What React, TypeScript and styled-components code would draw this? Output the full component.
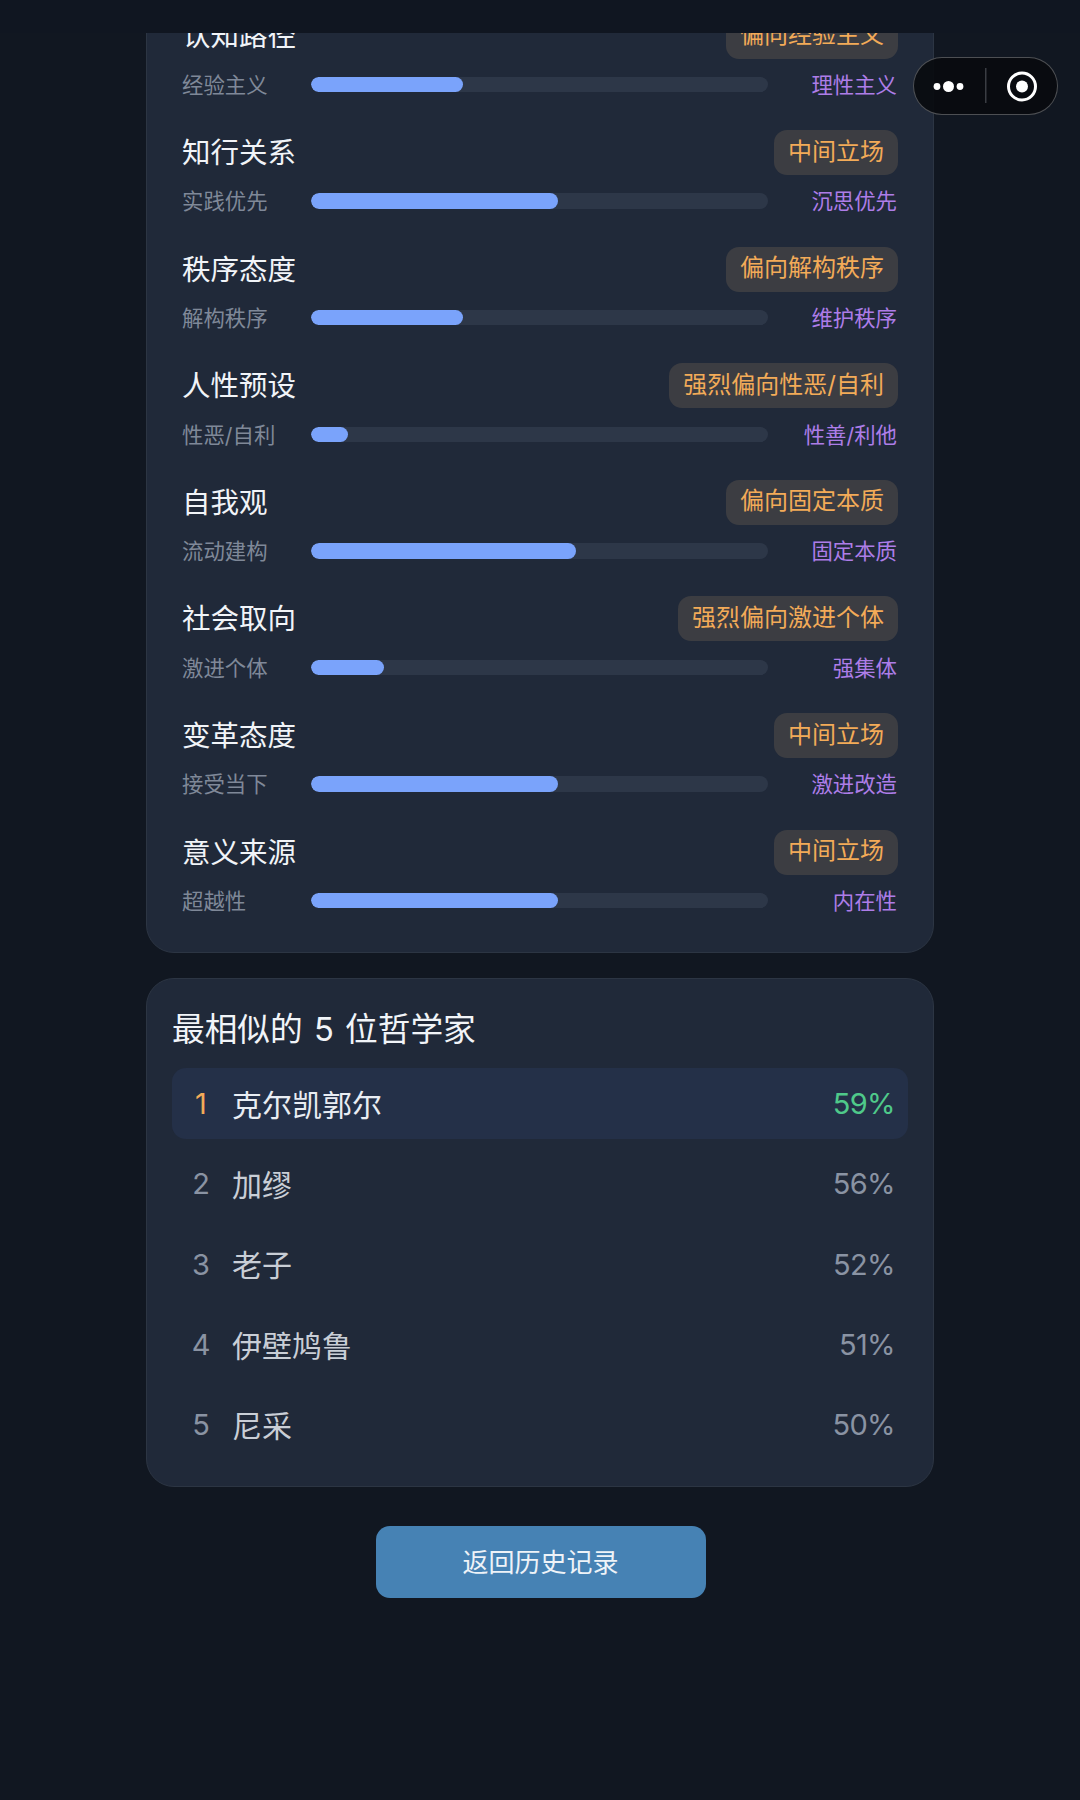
import styled, { createGlobalStyle } from "styled-components";

const GlobalStyle = createGlobalStyle`
  * {
    box-sizing: border-box;
  }
  html,
  body {
    margin: 0;
    padding: 0;
    background: #111721;
  }
  body {
    font-family: Inter, "Noto Sans CJK SC", sans-serif;
  }
`;

const Page = styled.div`
  position: relative;
  width: 1080px;
  height: 1800px;
  overflow: hidden;
  display: flex;
  flex-direction: column;
  background: #111721;
`;

const NavBar = styled.div`
  flex: 0 0 33px;
  background: #101621;
`;

const Scroller = styled.div`
  flex: 1;
  overflow: hidden;
  padding: 0 146px;
`;

const Card = styled.section`
  background: #202939;
  border: 1.5px solid #2c3543;
  border-radius: 28px;
`;

const AxisCard = styled(Card)`
  margin-top: -52px;
  padding: 32px 35px 37px;
  display: flex;
  flex-direction: column;
  gap: 31.6px;
`;

const AxisRow = styled.div`
  display: flex;
  flex-direction: column;
  gap: 11px;
`;

const AxisHeader = styled.div`
  display: flex;
  align-items: center;
  justify-content: space-between;
  height: 45px;
`;

const AxisName = styled.h3`
  margin: 0;
  font-weight: 400;
  font-size: 28.5px;
  line-height: 1.2;
  color: #f1f4f8;
`;

const Badge = styled.span`
  display: flex;
  align-items: center;
  height: 45px;
  margin-top: -1px;
  padding: 0 14px 2px;
  border-radius: 13px;
  background: #3c3d42;
  color: #f3ab58;
  font-size: 24px;
  line-height: 1;
`;

const Scale = styled.div`
  display: grid;
  grid-template-columns: 129px 457px 1fr;
  align-items: center;
  height: 29px;
`;

const PoleLeft = styled.span`
  padding-top: 2px;
  font-size: 21.4px;
  line-height: 1;
  color: #7f8898;
`;

const PoleRight = styled.span`
  padding-top: 2px;
  padding-right: 1px;
  font-size: 21.4px;
  line-height: 1;
  color: #ad7de8;
  text-align: right;
`;

const Track = styled.div`
  height: 15.5px;
  border-radius: 8px;
  background: #2d3748;
  overflow: hidden;
`;

const Fill = styled.div`
  height: 100%;
  border-radius: 8px;
  background: #7aa3fb;
`;

const RankCard = styled(Card)`
  margin-top: 25px;
  padding: 29px 25px 26px;
`;

const RankTitle = styled.h2`
  margin: 0 0 17px;
  height: 43px;
  font-weight: 400;
  font-size: 32.7px;
  line-height: 43px;
  word-spacing: 2px;
  color: #f1f4f8;
`;

const RankList = styled.div`
  display: flex;
  flex-direction: column;
  gap: 9.3px;
`;

const RankRow = styled.div<{ $top?: boolean }>`
  display: flex;
  align-items: center;
  height: 71px;
  padding: 0 13px 2px 12px;
  border-radius: 14px;
  background: ${(p) => (p.$top ? "#243048" : "transparent")};
`;

const RankNo = styled.span<{ $top?: boolean }>`
  width: 34px;
  margin-right: 14px;
  padding-top: 2px;
  text-align: center;
  font-size: 29px;
  font-weight: 400;
  color: ${(p) => (p.$top ? "#f3ab58" : "#8a93a3")};
`;

const RankName = styled.span<{ $top?: boolean }>`
  flex: 1;
  font-size: 30px;
  color: ${(p) => (p.$top ? "#e9edf3" : "#c9ced6")};
`;

const RankScore = styled.span<{ $top?: boolean }>`
  padding-top: 2px;
  font-size: 29px;
  font-weight: 400;
  letter-spacing: -0.6px;
  color: ${(p) => (p.$top ? "#4fc98a" : "#8a93a3")};
`;

const Footer = styled.div`
  display: flex;
  justify-content: center;
  margin-top: 38.5px;
  padding-left: 1px;
`;

const BackButton = styled.button`
  width: 330px;
  height: 72px;
  padding-bottom: 3px;
  border: none;
  border-radius: 14px;
  background: #4682b4;
  color: #eef3f8;
  font-family: inherit;
  font-size: 26px;
`;

const Capsule = styled.div`
  position: absolute;
  top: 57px;
  left: 913px;
  width: 145px;
  height: 58px;
  border: 1.5px solid rgba(255, 255, 255, 0.28);
  border-radius: 29px;
  background: rgba(9, 11, 15, 0.92);
`;

const axes = [
  { name: "认知路径", tag: "偏向经验主义", left: "经验主义", right: "理性主义", value: 33.3 },
  { name: "知行关系", tag: "中间立场", left: "实践优先", right: "沉思优先", value: 54 },
  { name: "秩序态度", tag: "偏向解构秩序", left: "解构秩序", right: "维护秩序", value: 33.3 },
  { name: "人性预设", tag: "强烈偏向性恶/自利", left: "性恶/自利", right: "性善/利他", value: 8 },
  { name: "自我观", tag: "偏向固定本质", left: "流动建构", right: "固定本质", value: 58 },
  { name: "社会取向", tag: "强烈偏向激进个体", left: "激进个体", right: "强集体", value: 16 },
  { name: "变革态度", tag: "中间立场", left: "接受当下", right: "激进改造", value: 54 },
  { name: "意义来源", tag: "中间立场", left: "超越性", right: "内在性", value: 54 },
];

const philosophers = [
  { name: "克尔凯郭尔", score: 59 },
  { name: "加缪", score: 56 },
  { name: "老子", score: 52 },
  { name: "伊壁鸠鲁", score: 51 },
  { name: "尼采", score: 50 },
];

export default function App() {
  return (
    <Page>
      <GlobalStyle />
      <NavBar />
      <Scroller>
        <AxisCard>
          {axes.map((a) => (
            <AxisRow key={a.name}>
              <AxisHeader>
                <AxisName>{a.name}</AxisName>
                <Badge>{a.tag}</Badge>
              </AxisHeader>
              <Scale>
                <PoleLeft>{a.left}</PoleLeft>
                <Track>
                  <Fill style={{ width: `${a.value}%` }} />
                </Track>
                <PoleRight>{a.right}</PoleRight>
              </Scale>
            </AxisRow>
          ))}
        </AxisCard>
        <RankCard>
          <RankTitle>最相似的 5 位哲学家</RankTitle>
          <RankList>
            {philosophers.map((p, i) => (
              <RankRow key={p.name} $top={i === 0}>
                <RankNo $top={i === 0}>{i + 1}</RankNo>
                <RankName $top={i === 0}>{p.name}</RankName>
                <RankScore $top={i === 0}>{p.score}%</RankScore>
              </RankRow>
            ))}
          </RankList>
        </RankCard>
        <Footer>
          <BackButton>返回历史记录</BackButton>
        </Footer>
      </Scroller>
      <Capsule>
        <svg width="142" height="55" viewBox="0 0 142 55">
          <circle cx="23" cy="28.5" r="3.4" fill="#fff" />
          <circle cx="34.5" cy="28.5" r="5.5" fill="#fff" />
          <circle cx="46" cy="28.5" r="3.4" fill="#fff" />
          <rect x="71" y="10" width="1.5" height="35" fill="#3a3d43" />
          <circle cx="108" cy="28.5" r="13.5" fill="none" stroke="#fff" strokeWidth="3" />
          <circle cx="108" cy="28.5" r="6" fill="#fff" />
        </svg>
      </Capsule>
    </Page>
  );
}
